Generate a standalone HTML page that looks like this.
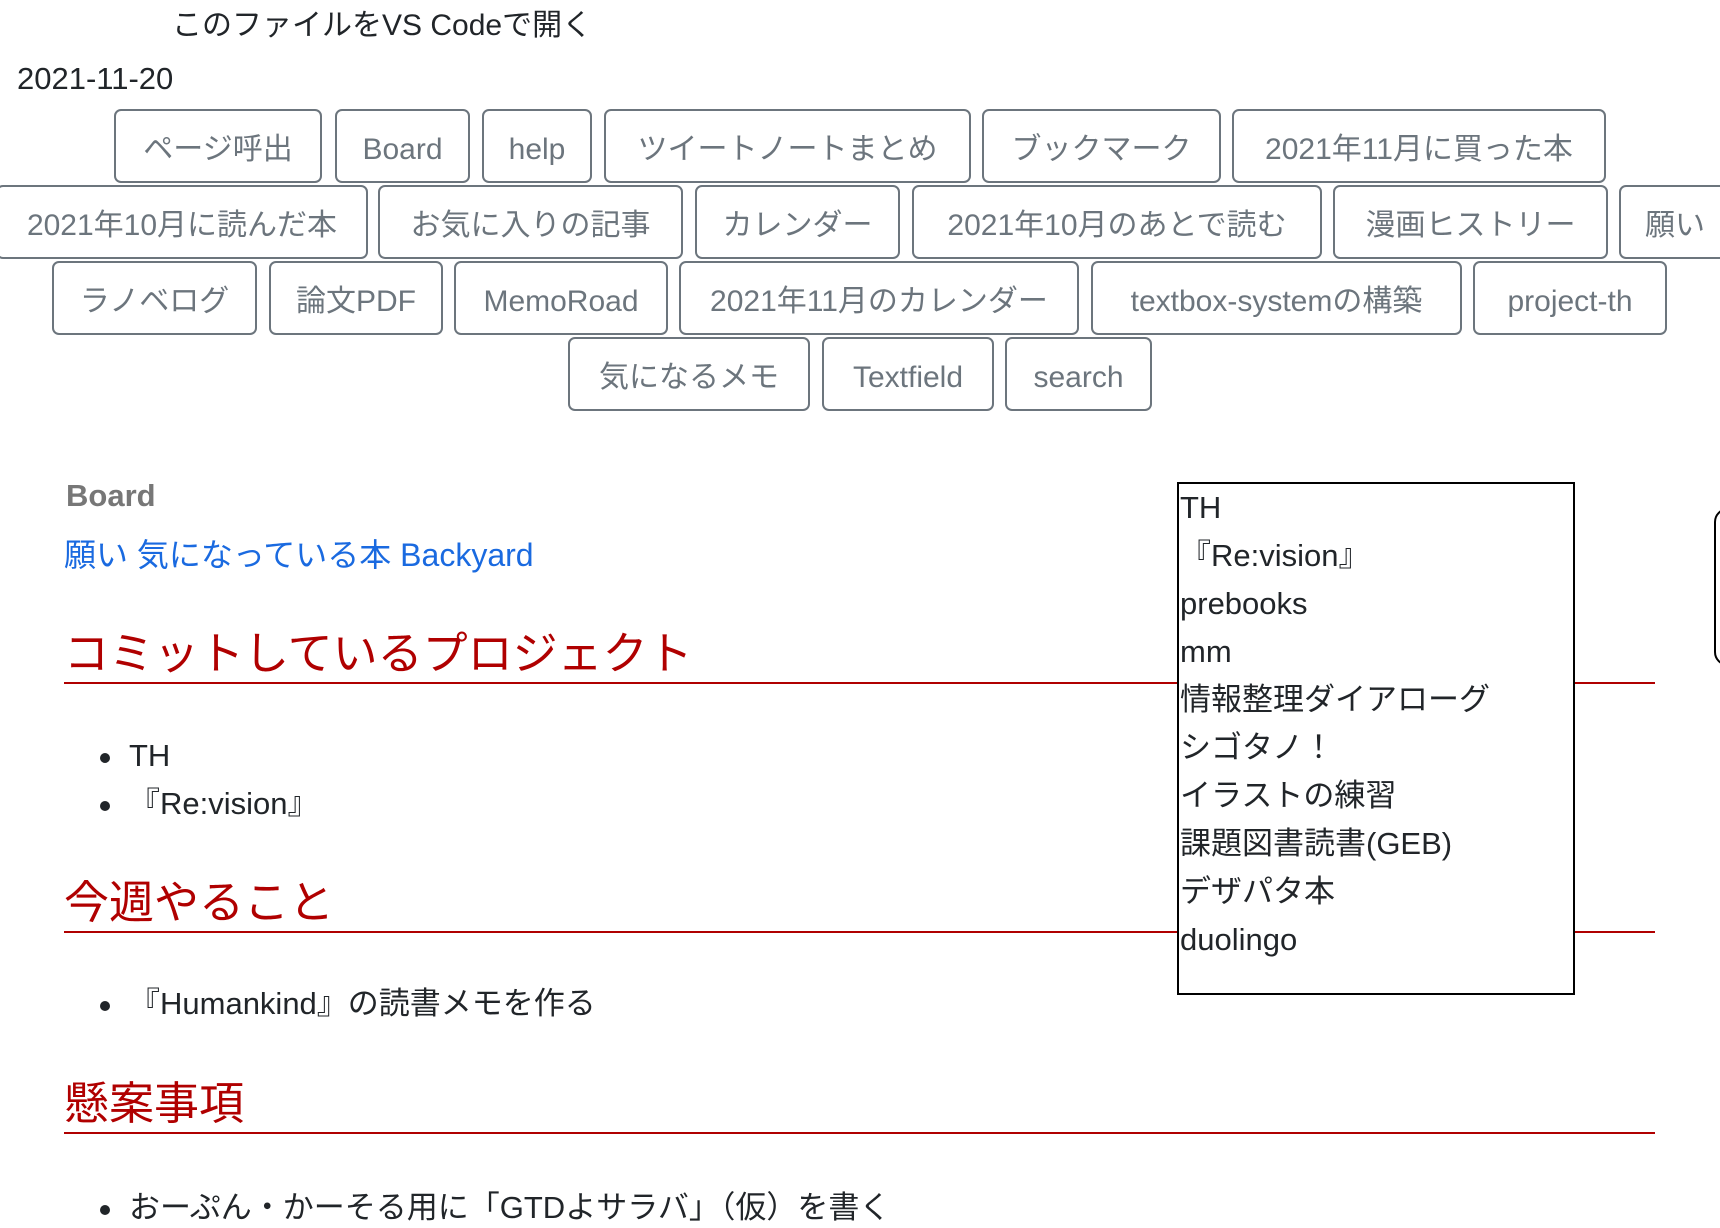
<!DOCTYPE html>
<html><head><meta charset="utf-8"><style>
body{margin:0;width:1720px;height:1214px;overflow:hidden;background:#fff;position:relative;font-family:"Liberation Sans","Noto Sans CJK JP",sans-serif;color:#212529}
.a{position:absolute;white-space:nowrap}
.b{position:absolute;height:74px;top:0;border:2px solid #6c757d;border-radius:7px;color:#6c757d;font-size:30px;line-height:70px;padding-top:4px;text-align:center;box-sizing:border-box;background:#fff;white-space:nowrap;overflow:hidden}
.row{position:absolute;left:0;width:1720px;height:76px}
h2{position:absolute;margin:0;left:64px;width:1591px;color:#b00000;font-weight:normal;font-size:45px;border-bottom:2px solid #b00000;line-height:56px;white-space:nowrap}
.li{position:absolute;left:129px;font-size:31px;line-height:40px;white-space:nowrap}
.li:before{content:"";position:absolute;left:-29px;top:17px;width:10px;height:10px;border-radius:50%;background:#212529}
.box{position:absolute;left:1177px;top:482px;width:398px;height:513px;border:2px solid #000;box-sizing:border-box;background:#fff;font-size:31px}
.box div{height:48px;line-height:48px;white-space:nowrap;padding-left:1px}
</style></head><body>
<div class="a" style="left:172px;top:7px;font-size:30px;line-height:38px">このファイルをVS Codeで開く</div>
<div class="a" style="left:17px;top:60px;font-size:31px;line-height:38px">2021-11-20</div>

<div class="row" style="top:109px">
<div class="b" style="left:114px;width:208px">ページ呼出</div>
<div class="b" style="left:335px;width:135px">Board</div>
<div class="b" style="left:482px;width:110px">help</div>
<div class="b" style="left:604px;width:367px">ツイートノートまとめ</div>
<div class="b" style="left:982px;width:239px">ブックマーク</div>
<div class="b" style="left:1232px;width:374px">2021年11月に買った本</div>
</div>
<div class="row" style="top:185px">
<div class="b" style="left:-4px;width:372px">2021年10月に読んだ本</div>
<div class="b" style="left:378px;width:305px">お気に入りの記事</div>
<div class="b" style="left:695px;width:205px">カレンダー</div>
<div class="b" style="left:912px;width:410px">2021年10月のあとで読む</div>
<div class="b" style="left:1333px;width:275px">漫画ヒストリー</div>
<div class="b" style="left:1619px;width:125px;text-align:left;padding-left:24px">願い</div>
</div>
<div class="row" style="top:261px">
<div class="b" style="left:52px;width:205px">ラノベログ</div>
<div class="b" style="left:269px;width:174px">論文PDF</div>
<div class="b" style="left:454px;width:214px">MemoRoad</div>
<div class="b" style="left:679px;width:400px">2021年11月のカレンダー</div>
<div class="b" style="left:1091px;width:371px">textbox-systemの構築</div>
<div class="b" style="left:1473px;width:194px">project-th</div>
</div>
<div class="row" style="top:337px">
<div class="b" style="left:568px;width:242px">気になるメモ</div>
<div class="b" style="left:822px;width:172px">Textfield</div>
<div class="b" style="left:1005px;width:147px">search</div>
</div>

<div class="a" style="left:66px;top:477px;font-size:31px;font-weight:bold;color:#777;line-height:38px">Board</div>
<div class="a" style="left:64px;top:535px;font-size:32px;color:#1a6ae0;line-height:40px">願い 気になっている本 Backyard</div>

<h2 style="top:626px">コミットしているプロジェクト</h2>
<div class="li" style="top:736px">TH</div>
<div class="li" style="top:784px">『Re:vision』</div>
<h2 style="top:875px">今週やること</h2>
<div class="li" style="top:984px">『Humankind』の読書メモを作る</div>
<h2 style="top:1076px">懸案事項</h2>
<div class="li" style="top:1188px">おーぷん・かーそる用に「GTDよサラバ」（仮）を書く</div>

<div class="box">
<div style="margin-top:0px">TH</div><div>『Re:vision』</div><div>prebooks</div><div>mm</div><div>情報整理ダイアローグ</div><div>シゴタノ！</div><div>イラストの練習</div><div>課題図書読書(GEB)</div><div>デザパタ本</div><div>duolingo</div>
</div>
<div class="a" style="left:1714px;top:508px;width:30px;height:158px;border:2px solid #000;border-radius:14px;box-sizing:border-box"></div>
</body></html>
